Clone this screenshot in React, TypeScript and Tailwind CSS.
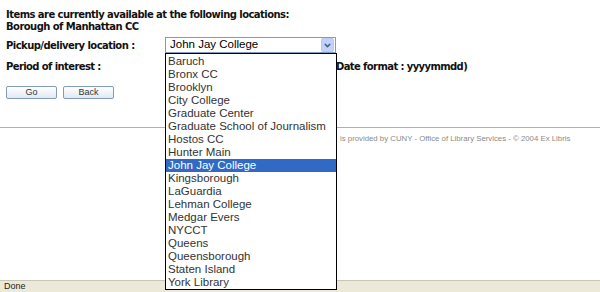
import { ChevronDown } from 'lucide-react'

const locations = [
  'Baruch',
  'Bronx CC',
  'Brooklyn',
  'City College',
  'Graduate Center',
  'Graduate School of Journalism',
  'Hostos CC',
  'Hunter Main',
  'John Jay College',
  'Kingsborough',
  'LaGuardia',
  'Lehman College',
  'Medgar Evers',
  'NYCCT',
  'Queens',
  'Queensborough',
  'Staten Island',
  'York Library',
]

const selected = 'John Jay College'

function XpButton({ label }: { label: string }) {
  return (
    <button className="flex h-[13px] w-[51px] items-center justify-center rounded-[2px] border border-[#7f9db9] bg-gradient-to-b from-white to-[#e3e8f2] font-['Liberation_Sans',sans-serif] text-[9px] leading-none text-[#333]">
      {label}
    </button>
  )
}

export default function App() {
  return (
    <div className="relative flex h-[292px] w-[600px] flex-col overflow-hidden bg-white font-['DejaVu_Sans',sans-serif]">
      <div className="flex-1 pt-[9px]">
        {/* Availability header */}
        <div className="pl-[6px] text-[10px] font-bold leading-[12px] tracking-[-0.55px] text-[#111]">
          <p>Items are currently available at the following locations:</p>
          <p>Borough of Manhattan CC</p>
        </div>

        <div className="mt-[4px] flex items-center pl-[6px]">
          <span className="w-[159px] text-[10px] font-bold tracking-[-0.55px] text-[#111]">
            Pickup/delivery location :
          </span>
          <div className="relative">
            <div className="flex h-[16px] w-[171px] items-center border border-[#7f9db9] bg-white">
              <span className="flex-1 pl-[4px] font-['Liberation_Sans',sans-serif] text-[11.5px] text-black">
                {selected}
              </span>
              <span className="mr-px flex h-[14px] w-[13px] items-center justify-center rounded-[2px] border border-[#b9c9ef] bg-[#c1d3fb]">
                <ChevronDown className="h-[9px] w-[9px] text-[#4d6185]" strokeWidth={4} />
              </span>
            </div>

            {/* Open dropdown list */}
            <ul className="absolute left-0 top-[16px] z-10 w-[172px] border border-black bg-white pt-px font-['Liberation_Sans',sans-serif] text-[11.5px] leading-[13px] text-[#333]">
              {locations.map((loc) => (
                <li
                  key={loc}
                  className={
                    loc === selected
                      ? 'bg-[#316ac5] pl-[2px] text-white'
                      : 'pl-[2px]'
                  }
                >
                  {loc}
                </li>
              ))}
            </ul>
          </div>
        </div>

        <div className="mt-[6px] flex items-center pl-[6px] text-[10px] font-bold tracking-[-0.6px] text-[#111]">
          <span className="w-[326px]">Period of interest :</span>
          <span>(Date format : yyyymmdd)</span>
        </div>

        <div className="mt-[12px] flex gap-[6px] pl-[6px]">
          <XpButton label="Go" />
          <XpButton label="Back" />
        </div>

        <hr className="mt-[28px] border-t border-[#b0b0b0]" />
        <p className="mt-[5px] pl-[340px] font-['Liberation_Sans',sans-serif] text-[7.8px] text-[#8a8a8a]">
          is provided by CUNY - Office of Library Services - © 2004 Ex Libris
        </p>
      </div>

      {/* Browser status bar */}
      <div className="flex h-[12px] items-center border-t border-[#c9c6b8] bg-[#ece9d8] pl-[4px] font-['Liberation_Sans',sans-serif] text-[9px] text-[#222]">
        Done
      </div>
    </div>
  )
}
